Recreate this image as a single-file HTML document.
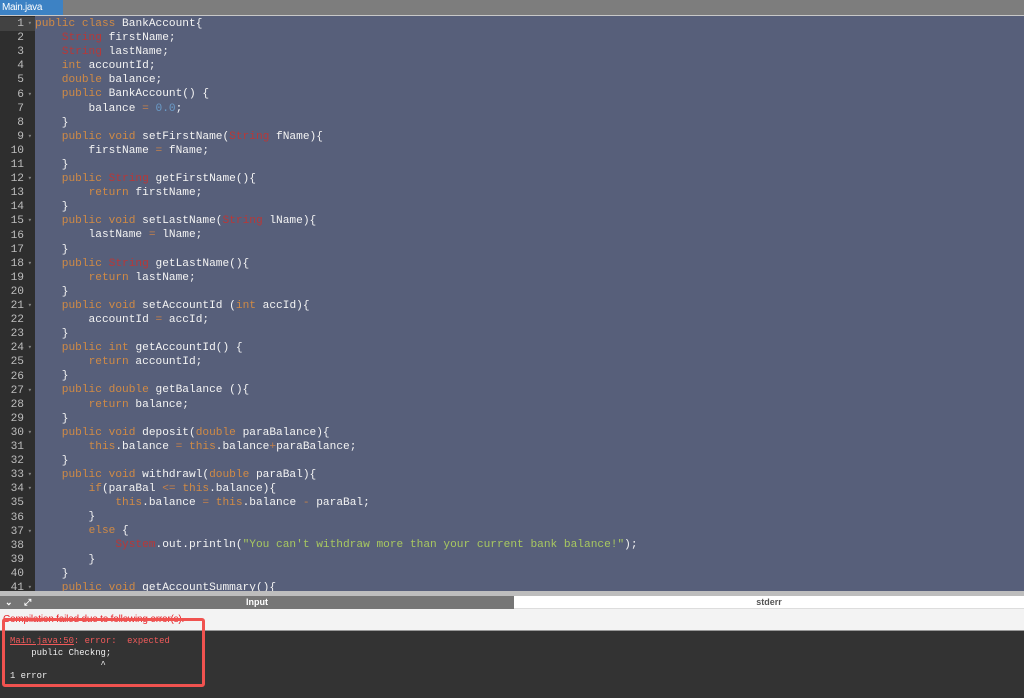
<!DOCTYPE html>
<html><head><meta charset="utf-8"><style>
*{margin:0;padding:0;box-sizing:border-box}
body{width:1024px;height:698px;overflow:hidden;background:#f3f3f3;font-family:"Liberation Sans",sans-serif;position:relative}
.tabbar{position:absolute;left:0;top:0;width:1024px;height:16px;background:#7d7d7d;border-bottom:1px solid #c8c8c8}
.tab{position:absolute;left:0;top:0;width:63px;height:15px;background:#3d82c4;color:#fff;font-size:10px;line-height:15px;padding-left:2px;letter-spacing:-0.3px}
.editor{position:absolute;left:0;top:16px;width:1024px;height:575px;background:#575f7a;overflow:hidden}
.gutter{position:absolute;left:0;top:1px;width:35px;height:575px;background:#2e2e2e}
.gbg{position:absolute;left:0;top:0;width:35px;height:575px;background:#2e2e2e}
.ln{position:absolute;left:0;width:35px;height:14.1px;font:11.2px/14.1px "Liberation Mono",monospace;color:#bdbdbd;text-align:right;padding-right:11px}
.ln.act{background:#424242}
.ln .f{position:absolute;right:3px;top:0;font-size:7px;color:#888}
.code{position:absolute;left:35px;top:1px;font:11.17px/14.1px "Liberation Mono",monospace;color:#f4f4f4;white-space:pre}
.k{color:#d08a45}.t{color:#b83838}.n{color:#6a9bc8}.s{color:#a8c860}.o{color:#c4804a}
.bar{position:absolute;left:0;top:591px;width:1024px;height:5px;background:#bdbdbd}
.tools{position:absolute;left:0;top:596px;width:514px;height:13px;background:#767676;color:#fff;font-size:9px;font-weight:bold;text-align:center;line-height:13px}
.stderr{position:absolute;left:514px;top:596px;width:510px;height:13px;background:#fff;color:#555;font-size:9px;font-weight:bold;text-align:center;line-height:13px;border-bottom:1px solid #ddd}
.msg{position:absolute;left:3px;top:614px;font-size:10px;color:#e8232a;letter-spacing:-0.2px}
.out{position:absolute;left:0;top:630px;width:1024px;height:68px;background:#333;border-top:1px solid #999}
.pre{position:absolute;left:10px;top:636px;font:8.9px/11.8px "Liberation Mono",monospace;color:#eee;white-space:pre}
.box{position:absolute;left:2px;top:618px;width:203px;height:69px;border:3px solid #f0524f;border-radius:3px}
</style></head><body>
<div class="tabbar"><div class="tab">Main.java</div></div>
<div class="editor">
<div class="gbg"></div>
<div class="gutter">
<div class="ln act" style="top:0px">1<span class="f">▾</span></div>
<div class="ln" style="top:14.1px">2</div>
<div class="ln" style="top:28.2px">3</div>
<div class="ln" style="top:42.3px">4</div>
<div class="ln" style="top:56.4px">5</div>
<div class="ln" style="top:70.5px">6<span class="f">▾</span></div>
<div class="ln" style="top:84.6px">7</div>
<div class="ln" style="top:98.7px">8</div>
<div class="ln" style="top:112.8px">9<span class="f">▾</span></div>
<div class="ln" style="top:126.9px">10</div>
<div class="ln" style="top:141px">11</div>
<div class="ln" style="top:155.1px">12<span class="f">▾</span></div>
<div class="ln" style="top:169.2px">13</div>
<div class="ln" style="top:183.3px">14</div>
<div class="ln" style="top:197.4px">15<span class="f">▾</span></div>
<div class="ln" style="top:211.5px">16</div>
<div class="ln" style="top:225.6px">17</div>
<div class="ln" style="top:239.7px">18<span class="f">▾</span></div>
<div class="ln" style="top:253.8px">19</div>
<div class="ln" style="top:267.9px">20</div>
<div class="ln" style="top:282px">21<span class="f">▾</span></div>
<div class="ln" style="top:296.1px">22</div>
<div class="ln" style="top:310.2px">23</div>
<div class="ln" style="top:324.3px">24<span class="f">▾</span></div>
<div class="ln" style="top:338.4px">25</div>
<div class="ln" style="top:352.5px">26</div>
<div class="ln" style="top:366.6px">27<span class="f">▾</span></div>
<div class="ln" style="top:380.7px">28</div>
<div class="ln" style="top:394.8px">29</div>
<div class="ln" style="top:408.9px">30<span class="f">▾</span></div>
<div class="ln" style="top:423px">31</div>
<div class="ln" style="top:437.1px">32</div>
<div class="ln" style="top:451.2px">33<span class="f">▾</span></div>
<div class="ln" style="top:465.3px">34<span class="f">▾</span></div>
<div class="ln" style="top:479.4px">35</div>
<div class="ln" style="top:493.5px">36</div>
<div class="ln" style="top:507.6px">37<span class="f">▾</span></div>
<div class="ln" style="top:521.7px">38</div>
<div class="ln" style="top:535.8px">39</div>
<div class="ln" style="top:549.9px">40</div>
<div class="ln" style="top:564px">41<span class="f">▾</span></div>
</div>
<div class="code"><span class="k">public</span> <span class="k">class</span> BankAccount{
    <span class="t">String</span> firstName;
    <span class="t">String</span> lastName;
    <span class="k">int</span> accountId;
    <span class="k">double</span> balance;
    <span class="k">public</span> BankAccount() {
        balance <span class="o">=</span> <span class="n">0.0</span>;
    }
    <span class="k">public</span> <span class="k">void</span> setFirstName(<span class="t">String</span> fName){
        firstName <span class="o">=</span> fName;
    }
    <span class="k">public</span> <span class="t">String</span> getFirstName(){
        <span class="k">return</span> firstName;
    }
    <span class="k">public</span> <span class="k">void</span> setLastName(<span class="t">String</span> lName){
        lastName <span class="o">=</span> lName;
    }
    <span class="k">public</span> <span class="t">String</span> getLastName(){
        <span class="k">return</span> lastName;
    }
    <span class="k">public</span> <span class="k">void</span> setAccountId (<span class="k">int</span> accId){
        accountId <span class="o">=</span> accId;
    }
    <span class="k">public</span> <span class="k">int</span> getAccountId() {
        <span class="k">return</span> accountId;
    }
    <span class="k">public</span> <span class="k">double</span> getBalance (){
        <span class="k">return</span> balance;
    }
    <span class="k">public</span> <span class="k">void</span> deposit(<span class="k">double</span> paraBalance){
        <span class="k">this</span>.balance <span class="o">=</span> <span class="k">this</span>.balance<span class="o">+</span>paraBalance;
    }
    <span class="k">public</span> <span class="k">void</span> withdrawl(<span class="k">double</span> paraBal){
        <span class="k">if</span>(paraBal <span class="o">&lt;=</span> <span class="k">this</span>.balance){
            <span class="k">this</span>.balance <span class="o">=</span> <span class="k">this</span>.balance <span class="o">-</span> paraBal;
        }
        <span class="k">else</span> {
            <span class="t">System</span>.out.println(<span class="s">"You can't withdraw more than your current bank balance!"</span>);
        }
    }
    <span class="k">public</span> <span class="k">void</span> getAccountSummary(){</div>
</div>
<div class="bar"></div>
<div class="tools"><span style="position:absolute;left:5px;top:0;font-size:9px">⌄</span><span style="position:absolute;left:24px;top:0;font-size:9px">⤢</span>Input</div>
<div class="stderr">stderr</div>
<div class="msg">Compilation failed due to following error(s).</div>
<div class="out"></div>
<div class="pre"><span style="color:#f05a5a;text-decoration:underline">Main.java:50</span><span style="color:#f05a5a">: error:  expected</span>
    public Checkng;
                 ^
1 error</div>
<div class="box"></div>
</body></html>
